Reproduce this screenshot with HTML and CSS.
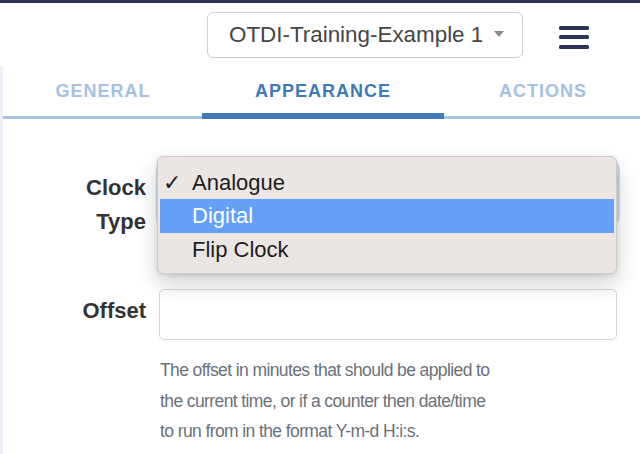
FILE: index.html
```html
<!DOCTYPE html>
<html>
<head>
<meta charset="utf-8">
<link rel="stylesheet" href="styles.css">
</head>
<body>
<div class="topbar"></div>
<header class="header">
  <div class="site-select">
    <span class="site-name">OTDI-Training-Example 1</span>
    <span class="caret"></span>
  </div>
  <svg class="burger" width="30" height="24" viewBox="0 0 30 24">
    <rect x="0" y="1" width="30" height="4" rx="1.5" fill="#2a3556"/>
    <rect x="0" y="10" width="30" height="4" rx="1.5" fill="#2a3556"/>
    <rect x="0" y="20" width="30" height="4" rx="1.5" fill="#2a3556"/>
  </svg>
</header>
<main class="main">
  <nav class="tabs">
    <div class="tab">GENERAL</div>
    <div class="tab active">APPEARANCE</div>
    <div class="tab">ACTIONS</div>
  </nav>
  <form class="form">
    <label class="label label-clock">Clock<br>Type</label>
    <div class="field field-clock">
      <div class="select-under"></div>
      <div class="menu">
        <div class="item"><span class="check">✓</span>Analogue</div>
        <div class="item selected">Digital</div>
        <div class="item">Flip Clock</div>
      </div>
    </div>
    <label class="label label-offset">Offset</label>
    <div class="field">
      <div class="input"></div>
      <p class="help">The offset in minutes that should be applied to the current time, or if a counter then date/time to run from in the format Y-m-d H:i:s.</p>
    </div>
  </form>
</main>
</body>
</html>
```

FILE: styles.css
```css
* { box-sizing: border-box; }
html, body { margin: 0; padding: 0; background: #fff; }
body { width: 640px; height: 454px; overflow: hidden; font-family: "Liberation Sans", Arial, sans-serif; }

.topbar { height: 3px; background: #2c3656; }

.header {
  height: 63px;
  display: flex;
  align-items: flex-start;
  justify-content: flex-end;
  padding-top: 9px;
  padding-right: 51px;
}
.site-select {
  width: 316px;
  height: 46px;
  border: 1px solid #cfcfcf;
  border-radius: 6px;
  display: flex;
  align-items: center;
  padding-left: 21px;
  padding-right: 18px;
  justify-content: space-between;
}
.site-name {
  font-family: "Liberation Sans", Arial, sans-serif;
  font-size: 22.4px;
  color: #454545;
}
.caret {
  width: 0; height: 0;
  border-left: 5px solid transparent;
  border-right: 5px solid transparent;
  border-top: 6px solid #8a8a8a;
  margin-top: -2px;
}
.burger { margin-left: 36px; margin-top: 13px; }

.main {
  border-left: 3px solid #eef0f8;
  height: 388px;
}

.tabs {
  display: flex;
  height: 53px;
  border-bottom: 3px solid #a8c3de;
}
.tab {
  width: 220px;
  flex: none;
  text-align: center;
  font-family: "Liberation Sans", Arial, sans-serif;
  font-weight: 700;
  font-size: 18px;
  letter-spacing: 1px;
  color: #a4c1df;
  padding-top: 15px;
  position: relative;
}
.tab:first-child { margin-left: -10px; }
.tab.active { color: #3f79b7; }
.tab.active::after {
  content: "";
  position: absolute;
  left: -11px; right: -11px;
  bottom: -3px;
  height: 6px;
  background: #4379b6;
}

.form {
  display: grid;
  grid-template-columns: 143px 1fr;
  column-gap: 13px;
  padding-right: 23px;
  padding-top: 41px;
}
.label {
  text-align: right;
  font-family: "Liberation Sans", Arial, sans-serif;
  font-weight: 700;
  font-size: 22px;
  color: #333;
}
.label-clock { line-height: 34px; padding-top: 11px; }
.label-offset { line-height: 24px; padding-top: 10px; }

.field { min-width: 0; }
.field-clock { position: relative; height: 129px; padding-top: 4px; }
.select-under {
  height: 58px;
  border: 1px solid #9ebbd9;
  border-radius: 5px;
  box-shadow: 0 0 0 3px rgba(120, 160, 205, 0.35);
  background: #fff;
}
.menu {
  position: absolute;
  left: -2px; right: 0; top: -4px;
  height: 118px;
  background: #ebe6e3;
  border: 1px solid #cfcac7;
  border-radius: 6px;
  box-shadow: 0 10px 22px rgba(0,0,0,0.18), 0 1px 4px rgba(0,0,0,0.12);
  padding: 9px 2px 0 2px;
}
.item {
  height: 33px;
  line-height: 33px;
  font-family: "Liberation Sans", Arial, sans-serif;
  font-size: 22px;
  color: #1d1d1d;
  padding-left: 32px;
  position: relative;
}
.item.selected { background: #64a0f8; color: #fff; height: 34px; line-height: 34px; }
.check { position: absolute; left: 3px; top: 0; font-size: 22px; }

.input {
  height: 51px;
  border: 1px solid #d3d6da;
  border-radius: 5px;
  background: #fff;
}
.help {
  margin: 15px 0 0 1px;
  max-width: 338px;
  font-family: "Liberation Sans", Arial, sans-serif;
  font-size: 17.5px;
  letter-spacing: -0.6px;
  line-height: 30.5px;
  color: #6b7178;
}
```
